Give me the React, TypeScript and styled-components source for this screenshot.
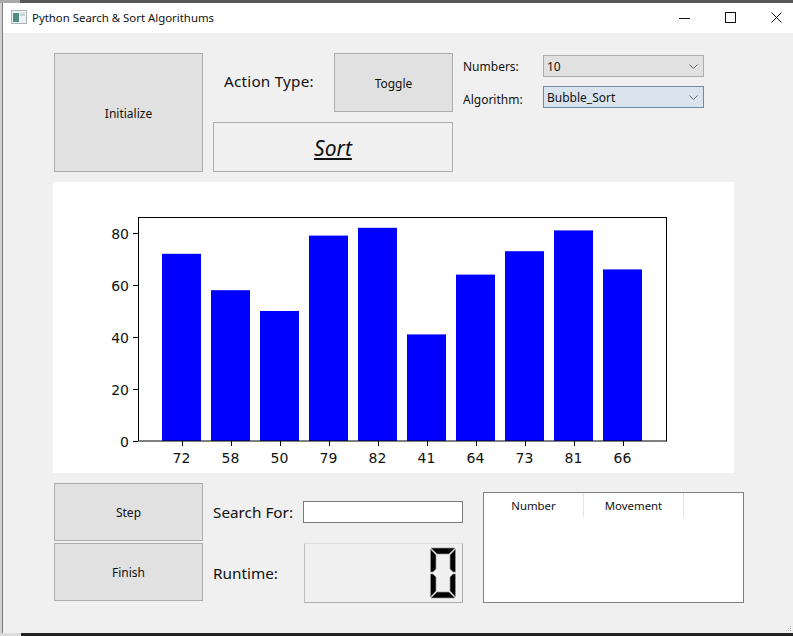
import React from 'react';
import styled, { createGlobalStyle } from 'styled-components';

const GlobalStyle = createGlobalStyle`
  html, body {
    margin: 0;
    padding: 0;
    background: #f0f0f0;
  }
  * {
    box-sizing: border-box;
  }
`;

const uiFont = `"Noto Sans", "Open Sans", "DejaVu Sans", sans-serif`;

const Window = styled.div`
  width: 793px;
  height: 636px;
  overflow: hidden;
  display: flex;
  flex-direction: column;
  background: #f0f0f0;
  font-family: ${uiFont};
  color: #111;
`;

const TopEdge = styled.div`
  height: 3px;
  flex: none;
  background: linear-gradient(to right, #a8a8a8 20px, #565656 20px);
`;

const BottomEdge = styled.div`
  height: 3px;
  flex: none;
  background: linear-gradient(to right, #dcdcdc 21px, #222 21px);
`;

const Frame = styled.div`
  flex: 1;
  display: flex;
  flex-direction: column;
  padding-left: 3px;
  background: linear-gradient(to right, #d0d0d0 2px, #7c7c7c 2px);
`;

const TitleBar = styled.div`
  height: 30px;
  flex: none;
  display: flex;
  align-items: center;
  background: #fff;
  padding: 0 0 2px 8px;
  margin-right: -6px;
  font-size: 11.4px;
`;

const TitleText = styled.span`
  margin-left: 5px;
  flex: 1;
`;

const WinButton = styled.div`
  width: 46px;
  height: 28px;
  display: flex;
  align-items: center;
  justify-content: center;
`;

const Body = styled.div`
  flex: 1;
  display: flex;
  flex-direction: column;
  padding: 20px 0 0 51px;
  position: relative;
  background: #f0f0f0;
`;

const TopRow = styled.div`
  display: flex;
  height: 119px;
`;

const Button = styled.div<{ $w: number; $h: number }>`
  width: ${(p) => p.$w}px;
  height: ${(p) => p.$h}px;
  flex: none;
  display: flex;
  align-items: center;
  justify-content: center;
  padding-top: 1px;
  background: #e1e1e1;
  border: 1px solid #adadad;
  font-size: 12px;
`;

const ActionColumn = styled.div`
  width: 240px;
  margin-left: 10px;
  display: flex;
  flex-direction: column;
  justify-content: space-between;
`;

const ActionRow = styled.div`
  display: flex;
  align-items: flex-start;
  justify-content: space-between;
`;

const BigLabel = styled.span`
  font-size: 15.3px;
  line-height: 22px;
`;

const ActionLabel = styled(BigLabel)`
  margin: 17px 0 0 11px;
  letter-spacing: 0.2px;
`;

const SortButton = styled.div`
  height: 50px;
  display: flex;
  align-items: center;
  justify-content: center;
  padding-top: 2px;
  background: #f0f0f0;
  border: 1px solid #adadad;
  font-size: 21px;
  font-style: italic;
  text-decoration: underline;
`;

const OptionsGrid = styled.div`
  margin: 2px 0 0 10px;
  display: grid;
  grid-template-columns: 80px 161px;
  grid-auto-rows: 22px;
  row-gap: 9px;
  align-items: center;
  align-content: start;
  font-size: 12px;
`;

const OptionLabel = styled.span<{ $drop?: number }>`
  padding-top: ${(p) => p.$drop ?? 0}px;
`;

const Select = styled.div<{ $focus?: boolean }>`
  height: 22px;
  display: flex;
  align-items: center;
  justify-content: space-between;
  padding: 0 5px 0 3px;
  background: ${(p) => (p.$focus ? '#d9e4ef' : '#e1e1e1')};
  border: 1px solid ${(p) => (p.$focus ? '#6f8aa3' : '#adadad')};
`;

const ChartPanel = styled.div`
  width: 681px;
  height: 291px;
  margin: 10px 0 10px -1px;
  background: #fff;
  flex: none;
`;

const BottomRow = styled.div`
  display: flex;
`;

const ButtonStack = styled.div`
  display: flex;
  flex-direction: column;
  gap: 2px;
`;

const SearchColumn = styled.div`
  width: 250px;
  margin-left: 10px;
  display: flex;
  flex-direction: column;
`;

const SearchRow = styled.div`
  display: flex;
  align-items: center;
  justify-content: space-between;
  height: 58px;
  margin-bottom: 2px;
`;

const SearchInput = styled.div`
  width: 160px;
  height: 22px;
  background: #fff;
  border: 1px solid #7a7a7a;
`;

const RuntimeRow = styled.div`
  display: flex;
  align-items: center;
  justify-content: space-between;
  height: 60px;
`;

const Lcd = styled.div`
  width: 159px;
  height: 60px;
  display: flex;
  align-items: center;
  justify-content: flex-end;
  padding-right: 6px;
  border: 1px solid #adadad;
  border-top-color: #dcdcdc;
  border-left-color: #bdbdbd;
`;

const MoveTable = styled.div`
  width: 261px;
  height: 111px;
  margin: 9px 0 0 20px;
  background: #fff;
  border: 1px solid #7f7f7f;
  flex: none;
`;

const TableHead = styled.div`
  display: flex;
  height: 24px;
`;

const HeadCell = styled.div`
  width: 100px;
  display: flex;
  align-items: center;
  justify-content: center;
  border-right: 1px solid #e3e3e3;
  font-size: 11.4px;
`;

const GripDots = styled.svg`
  position: absolute;
  right: 1px;
  bottom: 1px;
`;

const values = [72, 58, 50, 79, 82, 41, 64, 73, 81, 66];
const yTicks = [0, 20, 40, 60, 80];

// panel is at (53,182) in the window, so coordinates here are window - panel
const BarChart = () => {
  const baseY = 259;
  const left = 85;
  const right = 613;
  const top = 35.5;
  return (
    <svg width="681" height="291" viewBox="0 0 681 291">
      {values.map((v, i) => (
        <rect key={i} x={109 + i * 49} y={baseY - v * 2.6} width={39} height={v * 2.6} fill="#0000ff" />
      ))}
      <rect x={left + 0.5} y={top} width={right - left} height={baseY - top} fill="none" stroke="#000" strokeWidth="1" />
      {yTicks.map((t) => {
        const y = Math.round(baseY - t * 2.6) + 0.5;
        return (
          <g key={t}>
            <line x1={left - 5} x2={left} y1={y} y2={y} stroke="#000" />
            <text x={left - 9} y={y + 5} textAnchor="end" fontSize="14" fontFamily="DejaVu Sans, sans-serif" fill="#111">
              {t}
            </text>
          </g>
        );
      })}
      {values.map((v, i) => {
        const x = Math.round(128.5 + i * 49) + 0.5;
        return (
          <g key={i}>
            <line x1={x} x2={x} y1={baseY} y2={baseY + 5} stroke="#000" />
            <text x={x - 1} y={baseY + 22} textAnchor="middle" fontSize="14" fontFamily="DejaVu Sans, sans-serif" fill="#111">
              {v}
            </text>
          </g>
        );
      })}
    </svg>
  );
};

const LcdZero = () => (
  <svg width="26" height="52" viewBox="0 0 26 52">
    <g fill="#000" stroke="#9a9a9a" strokeWidth="0.7">
      <polygon points="1,1 25,1 19,7 7,7" />
      <polygon points="0.5,2 6,8 6,22 3,25 0.5,25" />
      <polygon points="25.5,2 20,8 20,22 23,25 25.5,25" />
      <polygon points="0.5,27 3,27 6,30 6,44 0.5,50" />
      <polygon points="25.5,27 23,27 20,30 20,44 25.5,50" />
      <polygon points="7,45 19,45 25,51 1,51" />
    </g>
  </svg>
);

const Chevron = () => (
  <svg width="9" height="5" viewBox="0 0 9 5">
    <path d="M0.5 0.5l4 4 4-4" fill="none" stroke="#666" strokeWidth="1" />
  </svg>
);

const AppIcon = () => (
  <svg width="16" height="14" viewBox="0 0 16 14">
    <rect x="0.5" y="0.5" width="15" height="13" fill="#eef2f2" stroke="#a9b5b5" />
    <rect x="2" y="3" width="6" height="9" fill="#4f8c86" />
    <rect x="9" y="3" width="5" height="3" fill="#c9d6d6" />
  </svg>
);

const App: React.FC = () => {
  return (
    <Window>
      <GlobalStyle />
      <TopEdge />
      <Frame>
        <TitleBar>
          <AppIcon />
          <TitleText>Python Search &amp; Sort Algorithums</TitleText>
          <WinButton>
            <svg width="11" height="11" viewBox="0 0 11 11">
              <line x1="0" x2="11" y1="6.5" y2="6.5" stroke="#111" />
            </svg>
          </WinButton>
          <WinButton>
            <svg width="11" height="11" viewBox="0 0 11 11">
              <rect x="0.5" y="0.5" width="10" height="10" fill="none" stroke="#111" />
            </svg>
          </WinButton>
          <WinButton>
            <svg width="11" height="11" viewBox="0 0 11 11">
              <path d="M0.5 0.5l10 10M10.5 0.5l-10 10" stroke="#111" fill="none" />
            </svg>
          </WinButton>
        </TitleBar>
        <Body>
          <TopRow>
            <Button $w={149} $h={119}>Initialize</Button>
            <ActionColumn>
              <ActionRow>
                <ActionLabel>Action Type:</ActionLabel>
                <Button $w={119} $h={59}>Toggle</Button>
              </ActionRow>
              <SortButton>Sort</SortButton>
            </ActionColumn>
            <OptionsGrid>
              <OptionLabel>Numbers:</OptionLabel>
              <Select>
                10
                <Chevron />
              </Select>
              <OptionLabel $drop={5}>Algorithm:</OptionLabel>
              <Select $focus>
                Bubble_Sort
                <Chevron />
              </Select>
            </OptionsGrid>
          </TopRow>
          <ChartPanel>
            <BarChart />
          </ChartPanel>
          <BottomRow>
            <ButtonStack>
              <Button $w={149} $h={58}>Step</Button>
              <Button $w={149} $h={58}>Finish</Button>
            </ButtonStack>
            <SearchColumn>
              <SearchRow>
                <BigLabel>Search For:</BigLabel>
                <SearchInput />
              </SearchRow>
              <RuntimeRow>
                <BigLabel>Runtime:</BigLabel>
                <Lcd>
                  <LcdZero />
                </Lcd>
              </RuntimeRow>
            </SearchColumn>
            <MoveTable>
              <TableHead>
                <HeadCell>Number</HeadCell>
                <HeadCell>Movement</HeadCell>
              </TableHead>
            </MoveTable>
          </BottomRow>
          <GripDots width="8" height="8" viewBox="0 0 8 8">
            <rect x="6" y="2" width="1" height="1" fill="#bbb" />
            <rect x="4" y="4" width="1" height="1" fill="#bbb" />
            <rect x="6" y="4" width="1" height="1" fill="#bbb" />
            <rect x="2" y="6" width="1" height="1" fill="#bbb" />
            <rect x="4" y="6" width="1" height="1" fill="#bbb" />
            <rect x="6" y="6" width="1" height="1" fill="#bbb" />
          </GripDots>
        </Body>
      </Frame>
      <BottomEdge />
    </Window>
  );
};

export default App;
